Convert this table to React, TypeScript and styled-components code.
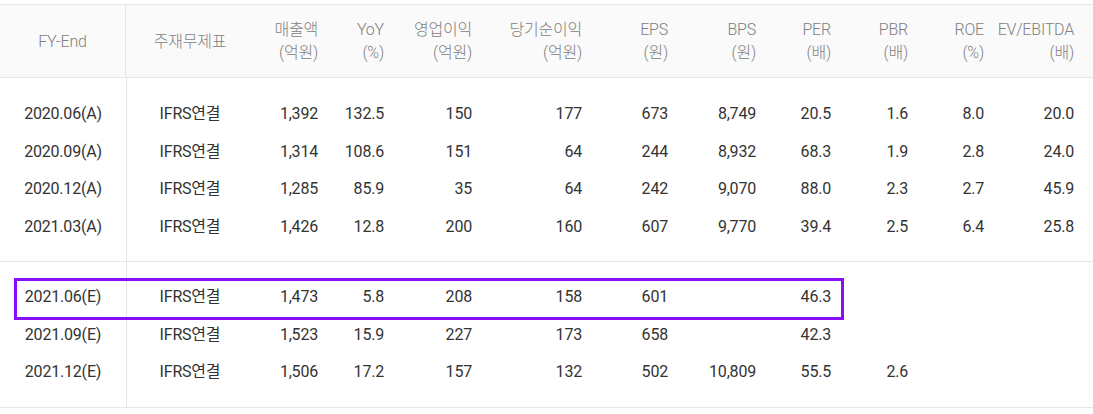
import React from 'react'
import styled, { createGlobalStyle } from 'styled-components'

const GlobalStyle = createGlobalStyle`
    body {
        margin: 0;
        background: #fff;
        font-family: Roboto, 'Noto Sans CJK KR', sans-serif;
    }
`

const columns = '126px 128px 64px 66px 88px 110px 86px 88px 75px 77px 76px 109px'

const Table = styled.div`
    position: relative;
    width: 1093px;
    margin-top: 4px;
    border-top: 1px solid #e6e6e6;
    color: #333;
    font-size: 16px;
    letter-spacing: -0.2px;
`

const HeaderRow = styled.div`
    display: grid;
    grid-template-columns: ${columns};
    height: 72px;
    background: #fafafa;
    border-bottom: 1px solid #e6e6e6;
    color: #808080;
    font-weight: 300;
`

const Section = styled.div<{ $last?: boolean }>`
    display: flex;
    flex-direction: column;
    padding: ${(p) => (p.$last ? '16px 0 16px' : '17px 0 16px')};
    border-bottom: 1px solid #e6e6e6;
    background: linear-gradient(#e6e6e6, #e6e6e6) 126px 0 / 1px 100% no-repeat;
`

const Row = styled.div`
    display: grid;
    grid-template-columns: ${columns};
    height: 37.5px;
    align-items: center;
`

const Cell = styled.div<{ $align?: 'center' | 'right'; $divider?: boolean }>`
    display: flex;
    flex-direction: column;
    justify-content: center;
    align-items: ${(p) => (p.$align === 'center' ? 'center' : 'flex-end')};
    text-align: ${(p) => p.$align || 'right'};
    height: 100%;
    white-space: nowrap;
    line-height: 23px;
    border-right: ${(p) => (p.$divider ? '1px solid #e6e6e6' : 'none')};
    &:last-child {
        padding-right: 19px;
    }
`

const Highlight = styled.div`
    position: absolute;
    left: 14px;
    top: 273px;
    width: 824px;
    height: 36px;
    border: 3px solid #8a0cff;
`

type Col = { title: string; unit?: string }

const headers: Col[] = [
    { title: '매출액', unit: '(억원)' },
    { title: 'YoY', unit: '(%)' },
    { title: '영업이익', unit: '(억원)' },
    { title: '당기순이익', unit: '(억원)' },
    { title: 'EPS', unit: '(원)' },
    { title: 'BPS', unit: '(원)' },
    { title: 'PER', unit: '(배)' },
    { title: 'PBR', unit: '(배)' },
    { title: 'ROE', unit: '(%)' },
    { title: 'EV/EBITDA', unit: '(배)' },
]

const actual = [
    ['2020.06(A)', '1,392', '132.5', '150', '177', '673', '8,749', '20.5', '1.6', '8.0', '20.0'],
    ['2020.09(A)', '1,314', '108.6', '151', '64', '244', '8,932', '68.3', '1.9', '2.8', '24.0'],
    ['2020.12(A)', '1,285', '85.9', '35', '64', '242', '9,070', '88.0', '2.3', '2.7', '45.9'],
    ['2021.03(A)', '1,426', '12.8', '200', '160', '607', '9,770', '39.4', '2.5', '6.4', '25.8'],
]

const estimate = [
    ['2021.06(E)', '1,473', '5.8', '208', '158', '601', '', '46.3', '', '', ''],
    ['2021.09(E)', '1,523', '15.9', '227', '173', '658', '', '42.3', '', '', ''],
    ['2021.12(E)', '1,506', '17.2', '157', '132', '502', '10,809', '55.5', '2.6', '', ''],
]

const DataRow = ({ data }: { data: string[] }) => (
    <Row>
        <Cell $align="center">{data[0]}</Cell>
        <Cell $align="center">IFRS연결</Cell>
        {data.slice(1).map((v, i) => (
            <Cell key={i}>{v}</Cell>
        ))}
    </Row>
)

export default function App() {
    return (
        <>
            <GlobalStyle />
            <Table>
                <HeaderRow>
                    <Cell $align="center" $divider>FY-End</Cell>
                    <Cell $align="center">주재무제표</Cell>
                    {headers.map((h) => (
                        <Cell key={h.title}>
                            <span>{h.title}</span>
                            <span>{h.unit}</span>
                        </Cell>
                    ))}
                </HeaderRow>
                <Section>
                    {actual.map((r) => (
                        <DataRow key={r[0]} data={r} />
                    ))}
                </Section>
                <Section $last>
                    {estimate.map((r) => (
                        <DataRow key={r[0]} data={r} />
                    ))}
                </Section>
                <Highlight />
            </Table>
        </>
    )
}
